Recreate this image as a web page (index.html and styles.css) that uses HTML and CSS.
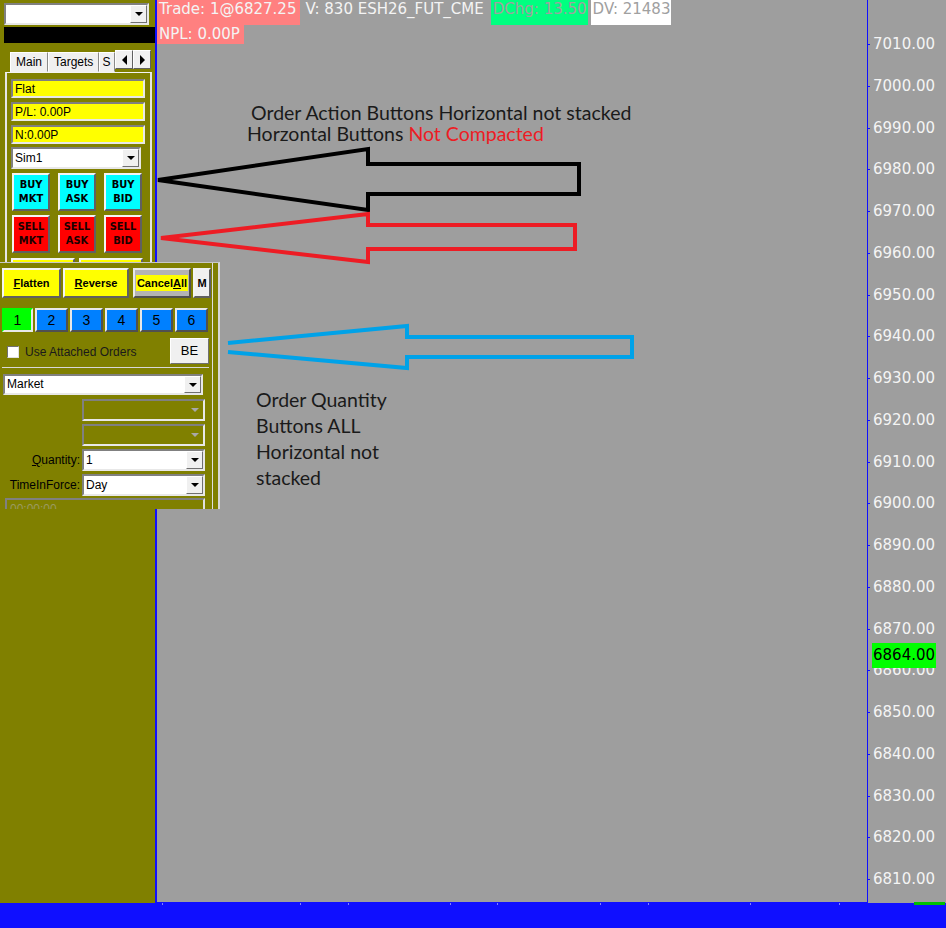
FILE: index.html
```html
<!DOCTYPE html>
<html lang="en">
<head>
    <meta charset="UTF-8">
    <title>ESH26 Chart - Trade Window</title>
    <link rel="stylesheet" href="styles.css">
</head>
<body>
<div class="screen">
    <div class="main">
        <!-- trade window docked on the left -->
        <aside class="side">
            <div class="combo top-combo"><span class="combo-text"></span><i class="drop"></i></div>
            <div class="black-bar"></div>
            <div class="tab-box">
                <div class="tabs">
                    <span class="tab">Main</span>
                    <span class="tab">Targets</span>
                    <span class="tab tab-cut">S</span>
                    <span class="tab-scroll"><i class="tri-left"></i></span>
                    <span class="tab-scroll"><i class="tri-right"></i></span>
                </div>
                <div class="tab-pane">
                    <div class="field">Flat</div>
                    <div class="field">P/L: 0.00P</div>
                    <div class="field">N:0.00P</div>
                    <div class="combo sim"><span class="combo-text">Sim1</span><i class="drop"></i></div>
                    <div class="action-row">
                        <button class="act buy">BUY<br>MKT</button>
                        <button class="act buy">BUY<br>ASK</button>
                        <button class="act buy">BUY<br>BID</button>
                    </div>
                    <div class="action-row">
                        <button class="act sell">SELL<br>MKT</button>
                        <button class="act sell">SELL<br>ASK</button>
                        <button class="act sell">SELL<br>BID</button>
                    </div>
                    <div class="action-row wide">
                        <button class="act half"></button>
                        <button class="act half"></button>
                    </div>
                </div>
            </div>
        </aside>

        <section class="chart">
            <div class="quote-row">
                <span class="quote trade">Trade: 1@6827.25</span>
                <span class="quote plain">V: 830 ESH26_FUT_CME</span>
                <span class="quote dchg">DChg: 13.50</span>
                <span class="quote dv">DV: 21483</span>
            </div>
            <div class="quote-row second">
                <span class="quote trade">NPL: 0.00P</span>
            </div>
        </section>

        <div class="axis">
            <div class="price">7010.00</div>
            <div class="price">7000.00</div>
            <div class="price">6990.00</div>
            <div class="price">6980.00</div>
            <div class="price">6970.00</div>
            <div class="price">6960.00</div>
            <div class="price">6950.00</div>
            <div class="price">6940.00</div>
            <div class="price">6930.00</div>
            <div class="price">6920.00</div>
            <div class="price">6910.00</div>
            <div class="price">6900.00</div>
            <div class="price">6890.00</div>
            <div class="price">6880.00</div>
            <div class="price">6870.00</div>
            <div class="price">6860.00</div>
            <div class="price">6850.00</div>
            <div class="price">6840.00</div>
            <div class="price">6830.00</div>
            <div class="price">6820.00</div>
            <div class="price">6810.00</div>
            <div class="last-price">6864.00</div>
        </div>
    </div>

    <div class="time-bar">
        <span class="tick" style="left:162px"></span>
        <span class="tick" style="left:300px"></span>
        <span class="tick" style="left:348px"></span>
        <span class="tick" style="left:450px"></span>
        <span class="tick" style="left:497px"></span>
        <span class="tick" style="left:600px"></span>
        <span class="tick" style="left:648px"></span>
        <span class="tick" style="left:750px"></span>
        <span class="tick" style="left:839px"></span>
        <span class="time-mark"></span>
    </div>

    <!-- floating order entry window -->
    <div class="order-panel">
        <div class="order-inner">
            <div class="cmd-row">
                <button class="cmd flatten"><u>F</u>latten</button>
                <button class="cmd reverse"><u>R</u>everse</button>
                <button class="cmd cancel"><span>Cancel<u>A</u>ll</span></button>
                <button class="cmd more">M</button>
            </div>
            <div class="qty-row">
                <button class="qty on">1</button>
                <button class="qty">2</button>
                <button class="qty">3</button>
                <button class="qty">4</button>
                <button class="qty">5</button>
                <button class="qty">6</button>
            </div>
            <div class="attach-row">
                <label class="attach"><span class="check"></span>Use Attached Orders</label>
                <button class="be">BE</button>
            </div>
            <div class="order-group">
                <div class="combo market"><span class="combo-text">Market</span><i class="drop"></i></div>
                <div class="form-row">
                    <span class="lbl"></span>
                    <div class="combo off"><span class="combo-text"></span><i class="drop"></i></div>
                </div>
                <div class="form-row">
                    <span class="lbl"></span>
                    <div class="combo off"><span class="combo-text"></span><i class="drop"></i></div>
                </div>
                <div class="form-row">
                    <span class="lbl"><u>Q</u>uantity:</span>
                    <div class="combo"><span class="combo-text">1</span><i class="drop"></i></div>
                </div>
                <div class="form-row">
                    <span class="lbl">TimeInForce:</span>
                    <div class="combo"><span class="combo-text">Day</span><i class="drop"></i></div>
                </div>
                <div class="time-field">00:00:00</div>
            </div>
        </div>
    </div>

    <div class="note note-action">
        <div class="first">Order Action Buttons Horizontal not stacked</div>
        <div>Horzontal Buttons <span class="red">Not Compacted</span></div>
    </div>
    <div class="note note-qty">Order Quantity<br>Buttons ALL<br>Horizontal not<br>stacked</div>

    <svg class="arrows" width="946" height="928" viewBox="0 0 946 928">
        <polygon points="158,180 368,149 368,164 579,164 579,194 368,194 368,210" stroke="#000" />
        <polygon points="161,238 368,214 368,225 575,225 575,249 368,249 368,262" stroke="#ed1c24" />
        <polyline points="228,343 407,326 407,337 632,337 632,357 407,357 407,368 228,352" stroke="#00a2e8" />
    </svg>
</div>
</body>
</html>
```

FILE: styles.css
```css
* {
    box-sizing: border-box;
}
body {
    margin: 0;
    background-color: #9e9e9e;
    font-family: "Liberation Sans", Arial, sans-serif;
    font-size: 12px;
    overflow: hidden;
}
button {
    font-family: inherit;
    padding: 0;
    margin: 0;
    cursor: pointer;
}
.screen {
    position: relative;
    width: 946px;
    height: 928px;
}
.main {
    display: flex;
    height: 903px;
}

/* left trade window */
.side {
    width: 155px;
    flex: none;
    background-color: #808000;
    padding: 3px 0 0 4px;
}
.combo {
    display: flex;
    height: 22px;
    background-color: #fff;
    border: 2px solid;
    border-color: #808080 #e8e8e8 #e8e8e8 #808080;
}
.combo-text {
    flex: 1;
    padding-left: 2px;
    line-height: 18px;
    color: #000;
}
.drop {
    width: 17px;
    flex: none;
    background-color: #f0f0f0;
    border: 1px solid;
    border-color: #fff #707070 #707070 #fff;
    display: flex;
    align-items: center;
    justify-content: center;
}
.drop::after {
    content: "";
    border-left: 4px solid transparent;
    border-right: 4px solid transparent;
    border-top: 4px solid #000;
}
.top-combo {
    width: 145px;
}
.black-bar {
    margin-top: 2px;
    height: 16px;
    width: 151px;
    background-color: #000;
}
.tab-box {
    margin: 7px 0 0 1px;
    width: 147px;
}
.tabs {
    display: flex;
    align-items: flex-start;
    height: 22px;
    padding-left: 5px;
}
.tab {
    margin-top: 2px;
    height: 20px;
    padding: 0 5px;
    line-height: 19px;
    font-size: 12px;
    background-color: #f0f0f0;
    border: 1px solid;
    border-color: #fff #8a8a8a #f0f0f0 #fff;
}
.tab-cut {
    width: 16px;
    padding: 0 2px;
    overflow: hidden;
}
.tab-scroll {
    width: 18px;
    height: 19px;
    background-color: #f0f0f0;
    border: 1px solid;
    border-color: #fff #606060 #606060 #fff;
    display: flex;
    align-items: center;
    justify-content: center;
}
.tri-left {
    border-top: 5px solid transparent;
    border-bottom: 5px solid transparent;
    border-right: 5px solid #000;
}
.tri-right {
    border-top: 5px solid transparent;
    border-bottom: 5px solid transparent;
    border-left: 5px solid #000;
}
.tab-pane {
    height: 220px;
    border-top: 1px solid #f4f4f4;
    border-left: 2px solid #e6e6e6;
    border-right: 2px solid #e6e6e6;
    padding: 6px 0 0 4px;
}
.field {
    width: 134px;
    height: 19px;
    margin-bottom: 4px;
    padding-left: 2px;
    line-height: 16px;
    background-color: #ffff00;
    border: 2px solid;
    border-color: #808080 #e8e8e8 #e8e8e8 #808080;
}
.sim {
    width: 130px;
    margin-top: -1px;
}
.action-row {
    display: flex;
    gap: 8px;
    margin: 4px 0 0 1px;
}
.act {
    width: 38px;
    height: 38px;
    font-family: "Liberation Sans Narrow", "DejaVu Sans Condensed", "Liberation Sans", sans-serif;
    font-weight: bold;
    font-size: 11px;
    line-height: 14px;
    color: #000;
    border: 2px solid;
    border-color: #f4f4f4 #606060 #606060 #f4f4f4;
}
.buy {
    background-color: #00ffff;
}
.sell {
    background-color: #ff0000;
    color: #1a0000;
}
.action-row.wide {
    gap: 4px;
    margin: 5px 0 0 0;
}
.half {
    width: 64px;
    background-color: #ffff00;
}

/* chart area */
.chart {
    width: 713px;
    flex: none;
    border-left: 2px solid #0f0fff;
    border-right: 1px solid #0f0fff;
    border-bottom: 1px solid #0f0fff;
    font-family: "DejaVu Sans", Verdana, sans-serif;
    font-size: 15px;
}
.quote-row {
    display: flex;
    gap: 3px;
    height: 25px;
}
.quote-row.second {
    height: 19px;
}
.quote {
    padding: 0 4px 0 2px;
    line-height: 19px;
    color: #f4f4f4;
}
.trade {
    background-color: #ff8080;
}
.dchg {
    padding-right: 1px;
    background-color: #00ff80;
    color: #a0a0a0;
}
.dv {
    padding-right: 1px;
    background-color: #fff;
    color: #a0a0a0;
}

/* price scale */
.axis {
    position: relative;
    flex: 1;
    padding-top: 24px;
    font-family: "DejaVu Sans", Verdana, sans-serif;
    font-size: 15px;
    color: #f4f4f4;
}
.price {
    position: relative;
    height: 41.75px;
    line-height: 41.75px;
    padding-left: 5px;
}
.price::before {
    content: "";
    position: absolute;
    left: 0;
    top: 20px;
    width: 2px;
    height: 1px;
    background-color: #0f0fff;
}
.last-price {
    position: absolute;
    left: 4px;
    top: 643px;
    width: 64px;
    height: 25px;
    padding-left: 1px;
    line-height: 25px;
    background-color: #00ff00;
    color: #000;
}

/* time scale */
.time-bar {
    position: relative;
    height: 25px;
    background-color: #0f0fff;
}
.tick {
    position: absolute;
    top: 0;
    width: 1px;
    height: 2px;
    background-color: #8080ff;
}
.time-mark {
    position: absolute;
    right: 1px;
    top: -1px;
    width: 31px;
    height: 3px;
    background-color: #00c000;
}

/* floating order entry window */
.order-panel {
    position: absolute;
    left: 0;
    top: 262px;
    width: 220px;
    height: 247px;
    overflow: hidden;
    background-color: #808000;
    border-top: 1px solid #c8c8c8;
    border-right: 2px solid #d8d8d8;
    padding-right: 5px;
}
.order-inner {
    height: 100%;
    border-right: 1px solid #e0e0e0;
    padding: 5px 0 0 2px;
}
.cmd-row {
    display: flex;
    height: 30px;
}
.cmd {
    height: 30px;
    font-size: 11px;
    font-weight: bold;
    color: #000;
    border: 2px solid;
    border-color: #f4f4f4 #606060 #606060 #f4f4f4;
}
.flatten {
    width: 59px;
    background-color: #ffff00;
}
.reverse {
    width: 66px;
    margin-left: 2px;
    background-color: #ffff00;
}
.cancel {
    width: 58px;
    margin-left: 4px;
    background-color: #b4b4b4;
    border-color: #e8e8e8 #505050 #505050 #e8e8e8;
}
.cancel span {
    background-color: #ffff00;
    padding: 2px 1px;
}
.more {
    width: 18px;
    margin-left: 2px;
    background-color: #f0f0f0;
}
.qty-row {
    display: flex;
    gap: 2px;
    margin-top: 10px;
}
.qty {
    width: 33px;
    height: 24px;
    font-size: 14px;
    color: #000;
    background-color: #0080ff;
    border: 2px solid;
    border-color: #e8e8e8 #505050 #505050 #e8e8e8;
}
.qty.on {
    width: 31px;
    background-color: #00ff00;
    border-color: #00ff00 #e8e8e8 #e8e8e8 #00ff00;
}
.attach-row {
    display: flex;
    align-items: center;
    justify-content: space-between;
    height: 27px;
    margin-top: 5px;
    width: 207px;
}
.attach {
    display: flex;
    align-items: center;
    gap: 6px;
    padding: 3px 0 0 5px;
    font-size: 12px;
    color: #1a1a1a;
}
.check {
    width: 12px;
    height: 12px;
    background-color: #fff;
    border: 1px solid;
    border-color: #707070 #e0e0e0 #e0e0e0 #707070;
}
.be {
    width: 39px;
    height: 26px;
    font-size: 13px;
    background-color: #f0f0f0;
    border: 1px solid;
    border-color: #fff #707070 #707070 #fff;
}
.order-group {
    margin-top: 3px;
    width: 207px;
    border-top: 1px solid #d8d8d8;
    padding: 6px 0 0 1px;
}
.market {
    width: 200px;
    height: 21px;
}
.market .combo-text {
    line-height: 17px;
}
.form-row {
    display: flex;
    align-items: center;
    margin-top: 4px;
}
.form-row + .form-row {
    margin-top: 3px;
}
.lbl {
    width: 79px;
    padding-right: 2px;
    text-align: right;
    font-size: 12px;
    color: #000;
}
.form-row .combo {
    width: 123px;
}
.combo.off {
    background-color: transparent;
}
.combo.off .drop {
    background-color: transparent;
    border-color: transparent;
}
.combo.off .drop::after {
    border-top-color: #a8a8a8;
}
.time-field {
    margin: 2px 0 0 2px;
    width: 200px;
    height: 22px;
    padding-left: 3px;
    line-height: 18px;
    color: #9a9a60;
    border: 2px solid;
    border-color: #808080 #e0e0e0 #e0e0e0 #808080;
}

/* notes drawn on the chart */
.note {
    position: absolute;
    font-family: Lato, "Open Sans", sans-serif;
    font-size: 19.5px;
    color: #1a1a1a;
}
.note-action {
    left: 247px;
    top: 102px;
    line-height: 21px;
}
.note-action .first {
    padding-left: 4px;
}
.red {
    color: #ed1c24;
}
.note-qty {
    left: 256px;
    top: 387px;
    line-height: 26px;
}
.arrows {
    position: absolute;
    left: 0;
    top: 0;
    pointer-events: none;
}
.arrows polygon,
.arrows polyline {
    fill: none;
    stroke-width: 4;
    stroke-linejoin: miter;
}
```
